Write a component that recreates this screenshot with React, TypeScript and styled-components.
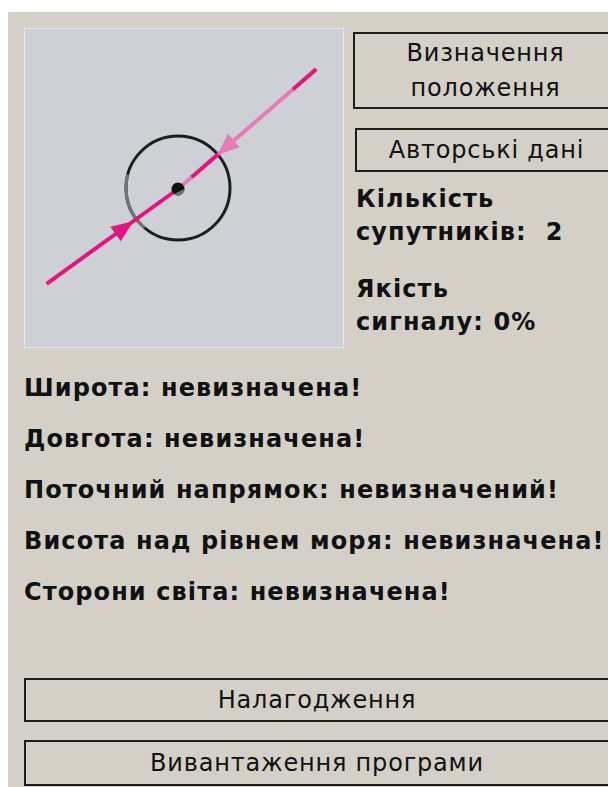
import styled, { createGlobalStyle } from 'styled-components';

const GlobalStyle = createGlobalStyle`
  html, body {
    margin: 0;
    padding: 0;
    background: #ffffff;
    overflow: hidden;
  }
`;

// radar geometry, in the box's own 320x320 space
const CENTER = { x: 154, y: 161 };
const RING = 52;
// the bearing is drawn as two rays leaving the centre
const LOWER = { x: -0.811, y: 0.585 };
const UPPER = { x: 0.7555, y: -0.655 };

const MAGENTA = '#e0177c';
const PINK = '#e47db6';

type Ray = { x: number; y: number };

const along = (ray: Ray, d: number) => ({
  x: CENTER.x + ray.x * d,
  y: CENTER.y + ray.y * d,
});

function RaySegment({ ray, from, to, color }: { ray: Ray; from: number; to: number; color: string }) {
  const a = along(ray, from);
  const b = along(ray, to);
  return (
    <line x1={a.x} y1={a.y} x2={b.x} y2={b.y} stroke={color} strokeWidth={4} strokeLinecap='butt' />
  );
}

// arrow head whose tip sits at distance `tip` and points back to the centre
function Head({ ray, tip, color }: { ray: Ray; tip: number; color: string }) {
  const t = along(ray, tip);
  const b = along(ray, tip + 22);
  const nx = -ray.y * 9;
  const ny = ray.x * 9;
  const pts = `${t.x},${t.y} ${b.x + nx},${b.y + ny} ${b.x - nx},${b.y - ny}`;
  return <polygon points={pts} fill={color} />;
}

function Radar() {
  const { x: cx, y: cy } = CENTER;
  const r = RING;
  const arcFrom = { x: cx - r * 0.966, y: cy - r * 0.259 };
  const arcTo = { x: cx - r * 0.643, y: cy + r * 0.766 };

  return (
    <MapBox>
      <svg width='318' height='318' viewBox='1 1 318 318'>
        <circle cx={cx} cy={cy - 1} r={r} fill='none' stroke='#1e1e1e' strokeWidth={3} />
        <path
          d={`M ${arcFrom.x} ${arcFrom.y - 1} A ${r} ${r} 0 0 0 ${arcTo.x} ${arcTo.y - 1}`}
          fill='none'
          stroke='#75757a'
          strokeWidth={3}
        />

        <RaySegment ray={LOWER} from={0} to={162} color={MAGENTA} />
        <Head ray={LOWER} tip={55} color={MAGENTA} />

        <RaySegment ray={UPPER} from={0} to={18} color={PINK} />
        <RaySegment ray={UPPER} from={18} to={54} color={MAGENTA} />
        <RaySegment ray={UPPER} from={54} to={152} color={PINK} />
        <RaySegment ray={UPPER} from={152} to={183} color={MAGENTA} />
        <Head ray={UPPER} tip={52} color={PINK} />

        <circle cx={cx} cy={cy} r={6.5} fill='#111' />
        <path d={`M ${cx + 6.5} ${cy} A 6.5 6.5 0 0 1 ${cx - 4} ${cy + 5} Z`} fill='#707070' />
      </svg>
    </MapBox>
  );
}

export default function App() {
  return (
    <>
      <GlobalStyle />
      <Window>
        <TopRow>
          <Radar />
          <SidePanel>
            <Button $height={77} $indent={8}>
              Визначення
              <br />
              положення
            </Button>
            <Button $height={44} $offset={2} $gap={19} $indent={8}>
              Авторські дані
            </Button>
            <Stats>
              <StatGroup>
                <Label>Кількість</Label>
                <Label>супутників:&nbsp; 2</Label>
              </StatGroup>
              <StatGroup>
                <Label>Якість</Label>
                <Label>сигналу: 0%</Label>
              </StatGroup>
            </Stats>
          </SidePanel>
        </TopRow>

        <Readout>
          <Label $row>Широта: невизначена!</Label>
          <Label $row>Довгота: невизначена!</Label>
          <Label $row>Поточний напрямок: невизначений!</Label>
          <Label $row>Висота над рівнем моря: невизначена!</Label>
          <Label $row>Сторони світа: невизначена!</Label>
        </Readout>

        <Actions>
          <Button $height={44}>Налагодження</Button>
          <Button $height={46}>Вивантаження програми</Button>
        </Actions>
      </Window>
    </>
  );
}

const Window = styled.div`
  margin: 12px 0 0 8px;
  height: 775px;
  box-sizing: border-box;
  padding: 16px 0 0 16px;
  background: #d4d0c8;
  font-family: 'DejaVu Sans', 'Liberation Sans', sans-serif;
  color: #111;
`;

const TopRow = styled.div`
  display: flex;
  align-items: flex-start;
`;

const MapBox = styled.div`
  width: 320px;
  height: 320px;
  box-sizing: border-box;
  border: 1px solid #e6e8ec;
  background: #ced0d5;
  flex-shrink: 0;

  svg {
    display: block;
  }
`;

const SidePanel = styled.div`
  margin-left: 9px;
  padding-top: 4px;
  flex: 1;
  display: flex;
  flex-direction: column;
`;

// the panel is cut off by the window edge, so the buttons run open on the right
const Button = styled.button<{ $height: number; $offset?: number; $gap?: number; $indent?: number }>`
  display: block;
  height: ${(p) => p.$height}px;
  width: calc(100% - ${(p) => p.$offset ?? 0}px);
  margin-left: ${(p) => p.$offset ?? 0}px;
  margin-top: ${(p) => p.$gap ?? 0}px;
  box-sizing: border-box;
  border: 2px solid #1c1c1c;
  border-right: 0;
  background: transparent;
  padding: 0 0 0 ${(p) => p.$indent ?? 0}px;
  font-family: 'DejaVu Sans', 'Liberation Sans', sans-serif;
  font-size: 24px;
  letter-spacing: 0.8px;
  line-height: 35px;
  color: #111;
  text-align: center;
  cursor: pointer;
`;

const Stats = styled.div`
  margin-top: 11px;
  margin-left: 3px;
  display: flex;
  flex-direction: column;
  gap: 24px;
`;

const StatGroup = styled.div`
  display: flex;
  flex-direction: column;
`;

const Label = styled.div<{ $row?: boolean }>`
  font-weight: bold;
  font-size: 24px;
  letter-spacing: 1.1px;
  line-height: ${(p) => (p.$row ? 51 : 33)}px;
  white-space: nowrap;
`;

const Readout = styled.div`
  margin-top: 15px;
  display: flex;
  flex-direction: column;
`;

const Actions = styled.div`
  margin-top: 60px;
  display: flex;
  flex-direction: column;
  gap: 18px;
`;
